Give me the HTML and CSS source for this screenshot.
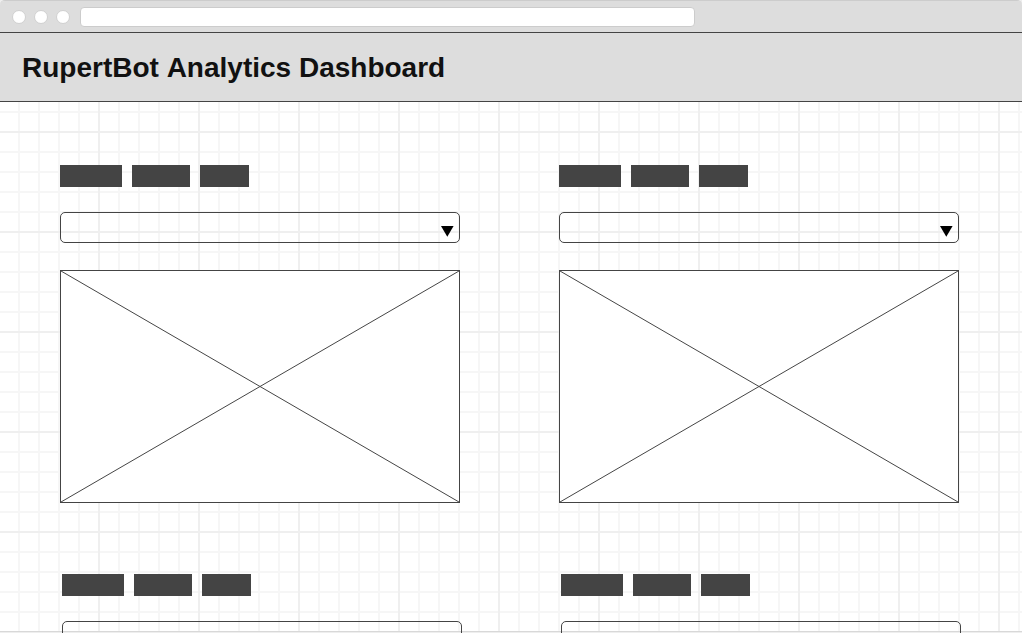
FILE: index.html
```html
<!DOCTYPE html>
<html lang="en">
<head>
<meta charset="utf-8">
<title>RupertBot Analytics Dashboard</title>
<link rel="stylesheet" href="styles.css">
</head>
<body>
<div class="browser">
  <div class="toolbar">
    <span class="dot"></span>
    <span class="dot"></span>
    <span class="dot"></span>
    <input class="address" type="text" aria-label="Address">
  </div>
  <header class="header">
    <h1 class="title">RupertBot Analytics Dashboard</h1>
  </header>
  <main class="content">
    <section class="row">
      <article class="panel">
        <div class="words"><span class="word word-long"></span><span class="word word-mid"></span><span class="word word-short"></span></div>
        <div class="picker"><select class="select" aria-label="First chart"><option></option></select><svg class="arrow" viewBox="0 0 13 11" aria-hidden="true"><path d="M0 0H12.6L6.3 10.8Z"/></svg></div>
        <svg class="chart" viewBox="0 0 400 233" preserveAspectRatio="none" aria-hidden="true"><path d="M0 0L400 233M400 0L0 233"/></svg>
      </article>
      <article class="panel">
        <div class="words"><span class="word word-long"></span><span class="word word-mid"></span><span class="word word-short"></span></div>
        <div class="picker"><select class="select" aria-label="Second chart"><option></option></select><svg class="arrow" viewBox="0 0 13 11" aria-hidden="true"><path d="M0 0H12.6L6.3 10.8Z"/></svg></div>
        <svg class="chart" viewBox="0 0 400 233" preserveAspectRatio="none" aria-hidden="true"><path d="M0 0L400 233M400 0L0 233"/></svg>
      </article>
    </section>
    <section class="row row-inset">
      <article class="panel">
        <div class="words"><span class="word word-long"></span><span class="word word-mid"></span><span class="word word-short"></span></div>
        <div class="picker"><select class="select" aria-label="Third chart"><option></option></select><svg class="arrow" viewBox="0 0 13 11" aria-hidden="true"><path d="M0 0H12.6L6.3 10.8Z"/></svg></div>
      </article>
      <article class="panel">
        <div class="words"><span class="word word-long"></span><span class="word word-mid"></span><span class="word word-short"></span></div>
        <div class="picker"><select class="select" aria-label="Fourth chart"><option></option></select><svg class="arrow" viewBox="0 0 13 11" aria-hidden="true"><path d="M0 0H12.6L6.3 10.8Z"/></svg></div>
      </article>
    </section>
  </main>
</div>
</body>
</html>
```

FILE: styles.css
```css
* {
  box-sizing: border-box;
}

body {
  margin: 0;
  height: 100vh;
  overflow: hidden;
  background: #eee;
  font-family: "Liberation Sans", Arial, sans-serif;
}

.browser {
  height: calc(100vh - 1px);
  border-top: 1px solid #ccc;
  border-bottom: 1px solid #d8d8d8;
  border-radius: 5px 5px 0 0;
  background-color: #fff;
  background-image:
    linear-gradient(#efefef 2px, transparent 2px),
    linear-gradient(90deg, #efefef 2px, transparent 2px),
    linear-gradient(#f6f6f6 2px, transparent 2px),
    linear-gradient(90deg, #f6f6f6 2px, transparent 2px);
  background-size: 100px 100px, 100px 100px, 20px 20px, 20px 20px;
  background-position: -2px 30px, -2px 30px, -2px 10px, -2px 10px;
}

.toolbar {
  display: flex;
  align-items: center;
  gap: 8px;
  height: 32px;
  padding-left: 12px;
  border-bottom: 1px solid #444;
  border-radius: 4px 4px 0 0;
  background: #ddd;
}

.dot {
  width: 14px;
  height: 14px;
  border: 1px solid #d0d0d0;
  border-radius: 50%;
  background: #fff;
}

.address {
  width: calc(60% + 9px);
  height: 20px;
  margin-left: 2px;
  padding: 0 6px;
  border: 1px solid #ccc;
  border-radius: 4px;
  background: #fff;
}

.header {
  padding: 19px 22px 17px;
  border-bottom: 1px solid #444;
  background: #ddd;
}

.title {
  margin: 0;
  color: #111;
  font-size: 28px;
  font-kerning: none;
  line-height: 32px;
}

.row {
  display: grid;
  grid-template-columns: 1fr 1fr;
  column-gap: 99px;
  padding: 63px 63px 0 60px;
}

.row-inset {
  padding: 71px 61px 0 62px;
}

.words {
  display: flex;
  gap: 10px;
}

.word {
  height: 22px;
  background: #444;
}

.word-long {
  width: 62px;
}

.word-mid {
  width: 58px;
}

.word-short {
  width: 49px;
}

.picker {
  position: relative;
  margin-top: 25px;
}

.select {
  display: block;
  appearance: none;
  width: 100%;
  height: 31px;
  padding: 0 24px 0 8px;
  border: 1px solid #444;
  border-radius: 5px;
  background: transparent;
}

.arrow {
  position: absolute;
  right: 6px;
  bottom: 6px;
  width: 13px;
  height: 11px;
  fill: #000;
  pointer-events: none;
}

.chart {
  display: block;
  width: 100%;
  height: 233px;
  margin-top: 27px;
  border: 1px solid #444;
  background: #fff;
}

.chart path {
  fill: none;
  stroke: #444;
  stroke-width: 1;
}
```
